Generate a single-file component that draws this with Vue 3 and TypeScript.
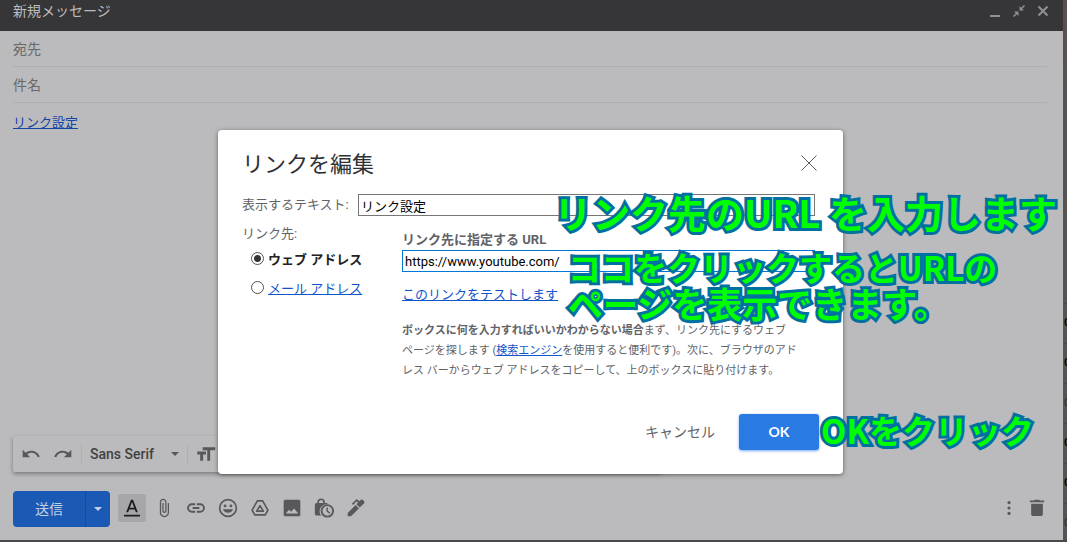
<script setup lang="ts">
import { ref } from 'vue'

const displayText = ref<string>('リンク設定')
const url = ref<string>('https://www.youtube.com/')
const linkType = ref<'web' | 'mail'>('web')
const to = ref<string>('')
const subject = ref<string>('')

interface MailRow {
  digit: string
  unread: boolean
}
const rows: MailRow[] = [
  { digit: '0', unread: true },
  { digit: '0', unread: true },
  { digit: '0', unread: false },
  { digit: '0', unread: true },
  { digit: '0', unread: true },
  { digit: '0', unread: false },
]
</script>

<template>
  <div class="screen">
    <main class="compose">
      <header class="titlebar">
        <h1>新規メッセージ</h1>
        <div class="window-buttons">
          <button type="button" aria-label="最小化">
            <svg viewBox="0 0 12 12"><path d="M1 11h10" stroke-width="2" /></svg>
          </button>
          <button type="button" aria-label="全画面表示を終了">
            <svg viewBox="0 0 12 12"><path d="M11.500.500 8 4M.5 11.500 4 8" stroke-width="1.500" /><path class="solid" d="M6.500 1v4.500H11zM5.500 11V6.500H1z" /></svg>
          </button>
          <button type="button" aria-label="閉じる">
            <svg viewBox="0 0 12 12"><path d="m1.500 1.500 9 9m0-9-9 9" stroke-width="2" /></svg>
          </button>
        </div>
      </header>
      <div class="fields">
        <input v-model="to" aria-label="宛先" placeholder="宛先" />
        <input v-model="subject" aria-label="件名" placeholder="件名" />
      </div>
      <div class="message"><a href="#">リンク設定</a></div>

      <div class="format-bar">
        <button type="button" class="tool" aria-label="元に戻す">
          <svg viewBox="0 0 24 24"><path d="M12.500 8c-2.650 0-5.050.990-6.900 2.600L2 7v9h9l-3.620-3.620c1.390-1.160 3.160-1.880 5.120-1.880 3.540 0 6.550 2.310 7.600 5.500l2.370-.780C21.080 11.030 17.150 8 12.500 8z" /></svg>
        </button>
        <button type="button" class="tool" aria-label="やり直す">
          <svg viewBox="0 0 24 24"><path d="M18.400 10.600C16.550 8.990 14.150 8 11.500 8c-4.650 0-8.580 3.030-9.960 7.220L3.900 16c1.050-3.190 4.050-5.500 7.600-5.500 1.950 0 3.730.720 5.120 1.880L13 16h9V7l-3.600 3.600z" /></svg>
        </button>
        <button type="button" class="font-picker">
          <span>Sans Serif</span>
          <svg viewBox="0 0 10 5"><path d="M0 0h10L5 5z" /></svg>
        </button>
        <button type="button" class="tool" aria-label="サイズ">
          <svg viewBox="0 0 24 24"><path d="M8 4v3.500h5.500V20h3.500V7.500H23V4H8zm-6.500 8.500h3.500V20h3.500v-7.500H12V9H1.500v3.500z" /></svg>
        </button>
      </div>

      <footer class="actions">
        <div class="send">
          <button type="button" class="send-main">送信</button>
          <button type="button" class="send-more" aria-label="その他の送信オプション">
            <svg viewBox="0 0 10 5"><path d="M0 0h10L5 5z" /></svg>
          </button>
        </div>
        <button type="button" class="tool pressed" aria-label="書式設定オプション">
          <svg viewBox="0 0 24 24"><path d="M2.500 20h19v2.200h-19zM10.800 2 5 17h2.400l1.200-3.200h6.800l1.200 3.200H19L13.200 2h-2.400zm-1.400 9.700L12 4.700l2.600 7H9.400z" /></svg>
        </button>
        <button type="button" class="tool" aria-label="ファイルを添付">
          <svg viewBox="0 0 24 24"><path d="M16.500 6v11.500c0 2.210-1.790 4-4 4s-4-1.790-4-4V5a2.500 2.500 0 0 1 5 0v10.500c0 .550-.450 1-1 1s-1-.450-1-1V6H10v9.500a2.500 2.500 0 0 0 5 0V5c0-2.210-1.790-4-4-4S7 2.790 7 5v12.500c0 3.040 2.460 5.500 5.500 5.500s5.500-2.460 5.500-5.500V6h-1.500z" /></svg>
        </button>
        <button type="button" class="tool" aria-label="リンクを挿入">
          <svg viewBox="0 0 24 24"><path d="M3.500 12c0-1.900 1.600-3.400 3.500-3.400h4V6.300H7a5.700 5.700 0 0 0 0 11.400h4v-2.300H7c-1.900 0-3.500-1.500-3.500-3.400zM8 13.100h8v-2.200H8v2.200zm9-6.800h-4v2.300h4a3.400 3.400 0 0 1 0 6.800h-4v2.300h4a5.700 5.700 0 0 0 0-11.400z" /></svg>
        </button>
        <button type="button" class="tool" aria-label="絵文字を挿入">
          <svg viewBox="0 0 24 24"><path d="M12 1a11 11 0 1 0 0 22 11 11 0 0 0 0-22zm0 2a9 9 0 1 1 0 18 9 9 0 0 1 0-18z" /><circle cx="8.500" cy="9.500" r="1.700" /><circle cx="15.500" cy="9.500" r="1.700" /><path d="M6 13.500h12a6.200 5.500 0 0 1-12 0z" /></svg>
        </button>
        <button type="button" class="tool" aria-label="ドライブを使用してファイルを挿入">
          <svg viewBox="0 0 24 24"><path class="line" d="M8.800 3.500h6.400l6.300 11-3.200 5.800H5.700l-3.200-5.800zM12 9.200 8 15.800h8z" /></svg>
        </button>
        <button type="button" class="tool" aria-label="写真を挿入">
          <svg viewBox="0 0 24 24"><path fill-rule="evenodd" d="M22 20V4c0-1.100-.9-2-2-2H4c-1.100 0-2 .9-2 2v16c0 1.100.9 2 2 2h16c1.100 0 2-.9 2-2zM8.500 14l2.500 2.500L14.500 12.500l5 6h-15z" /></svg>
        </button>
        <button type="button" class="tool" aria-label="情報保護モード">
          <svg viewBox="0 0 24 24"><path fill-rule="evenodd" d="M4 6V5a4.500 4.500 0 0 1 9 0v1h3v1.500A8.500 8.500 0 0 0 8.500 21H3a2 2 0 0 1-2-2V8c0-1.100.9-2 2-2zm2 0h5V5a2.500 2.500 0 0 0-5 0z" /><path fill-rule="evenodd" d="M16 7.500a8 8 0 1 0 0 16 8 8 0 0 0 0-16zm0 2.200a5.800 5.800 0 1 1 0 11.600 5.800 5.800 0 0 1 0-11.600z" /><path d="M15 11.500h1.700v3.800l2.800 2.200-1 1.300-3.500-2.700z" /></svg>
        </button>
        <button type="button" class="tool" aria-label="署名を挿入">
          <svg viewBox="0 0 24 24"><path d="M2 22v-4l9.500-9.500 4 4L6 22zM12.500 7.500l2-2L12.800 4 8.500 8.300 7 7l5-5c.6-.6 1.500-.6 2 0l2 2 1.500-1.500c.8-.8 2-.8 2.800 0l1.200 1.200c.8.8.8 2 0 2.800l-5 5z" /></svg>
        </button>
        <span class="spacer"></span>
        <button type="button" class="tool" aria-label="その他のオプション">
          <svg viewBox="0 0 24 24"><circle cx="12" cy="5.500" r="1.900" /><circle cx="12" cy="12" r="1.900" /><circle cx="12" cy="18.500" r="1.900" /></svg>
        </button>
        <button type="button" class="tool trash" aria-label="下書きを破棄">
          <svg viewBox="0 0 24 24"><path d="M5 7v12.500c0 1.100.9 2 2 2h10c1.100 0 2-.9 2-2V7H5zM3.500 5.200V3h5l1-1h5l1 1h5v2.200z" /></svg>
        </button>
      </footer>
    </main>

    <div class="mail-edge" aria-hidden="true">
      <span v-for="(row, i) in rows" :key="i" :class="{ unread: row.unread }">{{ row.digit }}</span>
    </div>

    <div class="overlay">
      <section class="dialog" role="dialog" aria-labelledby="dialog-title">
        <div class="dialog-head">
          <h2 id="dialog-title">リンクを編集</h2>
          <button type="button" class="close" aria-label="閉じる">
            <svg viewBox="0 0 16 16"><path d="m.5.5 15 15m0-15-15 15" /></svg>
          </button>
        </div>
        <div class="text-row">
          <label for="display-text">表示するテキスト:</label>
          <input id="display-text" v-model="displayText" type="text" />
        </div>
        <div class="columns">
          <fieldset>
            <legend>リンク先:</legend>
            <div class="choice">
              <input id="type-web" v-model="linkType" type="radio" name="type" value="web" />
              <label for="type-web" class="chosen">ウェブ アドレス</label>
            </div>
            <div class="choice">
              <input id="type-mail" v-model="linkType" type="radio" name="type" value="mail" />
              <label for="type-mail" class="linklike">メール アドレス</label>
            </div>
          </fieldset>
          <div class="target">
            <label for="url">リンク先に指定する URL</label>
            <input id="url" v-model="url" type="text" />
            <a href="#" class="test">このリンクをテストします</a>
            <p><b>ボックスに何を入力すればいいかわからない場合</b>まず、リンク先にするウェブ<br />ページを探します (<a href="#">検索エンジン</a>を使用すると便利です)。次に、ブラウザのアド<br />レス バーからウェブ アドレスをコピーして、上のボックスに貼り付けます。</p>
          </div>
        </div>
        <div class="buttons">
          <button type="button" class="cancel">キャンセル</button>
          <button type="button" class="ok">OK</button>
        </div>

        <p class="note note-url">リンク先のURL を入力します</p>
        <p class="note note-test">ココをクリックするとURLの<br /><span>ページを表示できます。</span></p>
        <p class="note note-ok">OKをクリック</p>
      </section>
    </div>
  </div>
</template>

<style>
body {
  background: #4d4d4f;
}
</style>

<style scoped>
.screen {
  position: relative;
  display: flex;
  box-sizing: border-box;
  height: 100vh;
  min-height: 540px;
  padding-bottom: 2px;
  overflow: hidden;
  background: #4a4a4c;
  font-family: Roboto, "Noto Sans CJK JP", sans-serif;
  font-size: 13px;
}
button {
  margin: 0;
  padding: 0;
  border: 0;
  background: none;
  font: inherit;
  color: inherit;
}
svg {
  display: block;
  fill: #58585a;
}
a {
  color: #1155cc;
}
.compose {
  flex: 1;
  display: flex;
  flex-direction: column;
  background: #bbbbbd;
}
.titlebar {
  display: flex;
  justify-content: space-between;
  height: 31px;
  padding: 0 14px 0 13px;
  background: #363638;
}
h1 {
  margin: 0;
  font-size: 14px;
  font-weight: 400;
  line-height: 22px;
  color: #bcbcbe;
}
.window-buttons {
  display: flex;
  gap: 12px;
  height: 22px;
  align-items: center;
}
.window-buttons svg {
  width: 12px;
  height: 12px;
  fill: none;
  stroke: #909092;
}
.window-buttons .solid {
  fill: #909092;
  stroke: none;
}
.fields {
  display: flex;
  flex-direction: column;
  padding: 0 16px 0 13px;
}
.fields input {
  height: 36px;
  box-sizing: border-box;
  padding: 0;
  border: 0;
  border-bottom: 1px solid #afafb1;
  background: none;
  font: inherit;
  font-size: 14px;
  color: #222;
}
.fields input::placeholder {
  color: #686868;
}
.message {
  flex: 1;
  padding: 10px 13px;
  line-height: 20px;
}
.message a {
  color: #1044a5;
}
.format-bar {
  display: flex;
  align-items: center;
  align-self: flex-start;
  box-sizing: border-box;
  width: 61%;
  height: 36px;
  margin-left: 13px;
  padding-left: 2px;
  border-radius: 2px;
  box-shadow: 0 2px 4px rgba(0, 0, 0, 0.35);
}
.tool {
  display: flex;
  align-items: center;
  justify-content: center;
  width: 32px;
  height: 28px;
}
.tool svg {
  width: 20px;
  height: 20px;
}
.font-picker {
  display: flex;
  align-items: center;
  justify-content: space-between;
  width: 107px;
  height: 20px;
  margin: 0 2px;
  padding: 0 8px;
  border: solid #afafb1;
  border-width: 0 1px;
  font-size: 14px;
  font-weight: 500;
  color: #414143;
}
.font-picker svg,
.send-more svg {
  width: 8px;
  height: 4px;
}
.actions {
  display: flex;
  align-items: flex-start;
  padding: 19px 14px 13px 13px;
}
.actions .tool {
  margin-top: 3px;
}
.actions .line {
  fill: none;
  stroke: #58585a;
  stroke-width: 2;
  stroke-linejoin: round;
}
.send {
  display: flex;
  height: 36px;
  margin-right: 8px;
  border-radius: 4px;
  overflow: hidden;
  background: #1b5ab4;
}
.send-main {
  width: 72px;
  padding-bottom: 3px;
  font-size: 14px;
  color: #c3d0e4;
}
.send-more {
  display: flex;
  align-items: center;
  justify-content: center;
  width: 25px;
  border-left: 1px solid #164b96;
}
.send-more svg {
  fill: #c3d0e4;
}
.actions .pressed {
  width: 28px;
  margin-right: 2px;
  border-radius: 2px;
  background: #a7a7a9;
}
.actions .pressed svg {
  fill: #1c1c1e;
}
.spacer {
  flex: 1;
}
.actions .trash {
  width: 24px;
}
.mail-edge {
  width: 4px;
  box-sizing: border-box;
  padding: 303px 0 0 1px;
  overflow: hidden;
  background: linear-gradient(#5b4e52, #545456 20%);
}
.mail-edge span {
  display: block;
  box-sizing: border-box;
  height: 40px;
  border-top: 1px solid #48484a;
  font-size: 11px;
  line-height: 38px;
  color: #2c2c2e;
}
.mail-edge .unread {
  font-weight: 700;
  color: #0a0a0a;
}
.overlay {
  position: absolute;
  inset: 0;
  display: flex;
  align-items: flex-start;
  justify-content: center;
  padding: 130px 6px 0 0;
}
.dialog {
  position: relative;
  box-sizing: border-box;
  width: 625px;
  padding: 21px 24px 24px;
  border-radius: 4px;
  background: #fff;
  box-shadow: 0 1px 4px rgba(0, 0, 0, 0.5);
  color: #5f6368;
}
.dialog-head {
  display: flex;
  justify-content: space-between;
  height: 43px;
}
h2 {
  margin: 0;
  font-size: 22px;
  font-weight: 400;
  line-height: 28px;
  color: #303134;
}
.close {
  align-self: flex-start;
  padding: 4px 2px;
}
.close svg {
  width: 16px;
  height: 16px;
  fill: none;
  stroke: #5c5c5c;
}
.text-row {
  display: flex;
  align-items: center;
  gap: 4px;
  padding-right: 4px;
}
.text-row label {
  width: 112px;
  line-height: 20px;
}
.text-row input,
.target input {
  flex: 1;
  box-sizing: border-box;
  height: 22px;
  min-width: 0;
  padding: 1px 2px;
  border: 1px solid #767676;
  border-radius: 0;
  outline: none;
  font: inherit;
  color: #000;
}
.columns {
  display: flex;
  margin-top: 8px;
}
fieldset {
  flex: none;
  width: 160px;
  margin: 0;
  padding: 0;
  border: 0;
}
legend {
  padding: 0;
  line-height: 20px;
}
.choice {
  display: flex;
  align-items: center;
  gap: 4px;
  height: 20px;
  margin: 4px 0 9px 9px;
}
.choice + .choice {
  margin-top: 0;
}
.choice input {
  appearance: none;
  width: 13px;
  height: 13px;
  margin: 0;
  border: 1px solid #555;
  border-radius: 50%;
  background: #fff;
}
.choice input:checked {
  background: radial-gradient(circle, #333 3px, #fff 4px);
}
.chosen {
  font-weight: 700;
  color: #222;
}
.linklike {
  color: #1155cc;
  text-decoration: underline;
}
.target {
  flex: 1;
  display: flex;
  flex-direction: column;
  align-items: flex-start;
  padding-right: 4px;
}
.target label {
  margin-top: 6px;
  font-weight: 700;
  line-height: 20px;
}
.target input {
  flex: none;
  width: 100%;
  border-color: #0078d7;
}
.test {
  margin-top: 13px;
  line-height: 20px;
}
.target p {
  margin: 16px 0 0;
  font-size: 11px;
  line-height: 20px;
  white-space: nowrap;
}
.buttons {
  display: flex;
  justify-content: flex-end;
  gap: 24px;
  margin-top: 33px;
}
.cancel {
  padding-bottom: 2px;
  font-size: 14px;
}
.ok {
  width: 80px;
  height: 36px;
  padding-bottom: 2px;
  border-radius: 3px;
  background: #2a7ae4;
  box-shadow: 0 1px 3px rgba(26, 115, 232, 0.6);
  font-family: Lato, sans-serif;
  font-size: 14px;
  font-weight: 700;
  color: #fff;
}
.note {
  position: absolute;
  margin: 0;
  font-family: "Noto Sans CJK JP", sans-serif;
  font-size: 33px;
  font-weight: 700;
  line-height: 36px;
  white-space: nowrap;
  color: #00ff00;
  -webkit-text-stroke: 6px #0070a0;
  paint-order: stroke fill;
  stroke-linejoin: round;
  pointer-events: none;
}
.note-url {
  top: 62px;
  left: 336px;
  font-size: 38px;
  line-height: 40px;
}
.note-test {
  top: 119px;
  left: 350px;
}
.note-test span {
  font-size: 35px;
}
.note-ok {
  top: 282px;
  left: 603px;
}
</style>
